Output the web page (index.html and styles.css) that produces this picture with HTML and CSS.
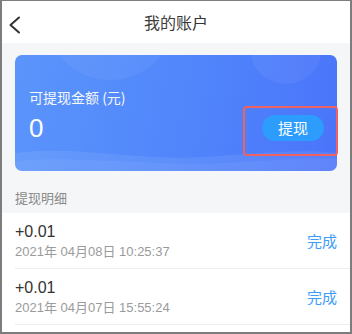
FILE: index.html
```html
<!DOCTYPE html>
<html lang="zh-CN">
<head>
<meta charset="utf-8">
<title>我的账户</title>
<link rel="stylesheet" href="styles.css">
</head>
<body>
<div class="frame">
  <header class="topbar">
    <svg class="back" width="14" height="18" viewBox="0 0 14 18"><path d="M12 1.5 L3.5 9 L12 16.5" fill="none" stroke="#333" stroke-width="2" stroke-linecap="round" stroke-linejoin="round"/></svg>
    <h1 class="title">我的账户</h1>
  </header>
  <main class="content">
    <section class="card">
      <div class="deco deco-a"></div>
      <div class="deco deco-b"></div>
      <svg class="wave" viewBox="0 0 322 24" preserveAspectRatio="none"><path d="M0 6 C60 -2 120 14 190 10 C250 6 290 2 322 6 L322 24 L0 24 Z" fill="rgba(255,255,255,0.08)"/><path d="M0 14 C70 8 140 20 210 16 C260 13 300 10 322 12 L322 24 L0 24 Z" fill="rgba(255,255,255,0.05)"/></svg>
      <div class="card-body">
        <div class="label">可提现金额 (元)</div>
        <div class="amount-row">
          <span class="amount">0</span>
          <button class="withdraw">提现</button>
        </div>
      </div>
      <div class="highlight"></div>
    </section>
    <div class="section-title">提现明细</div>
    <ul class="list">
      <li class="item">
        <div class="info">
          <div class="value">+0.01</div>
          <div class="date">2021年 04月08日 10:25:37</div>
        </div>
        <span class="status">完成</span>
      </li>
      <li class="item">
        <div class="info">
          <div class="value">+0.01</div>
          <div class="date">2021年 04月07日 15:55:24</div>
        </div>
        <span class="status">完成</span>
      </li>
    </ul>
  </main>
</div>
</body>
</html>
```
FILE: styles.css
```css
* { box-sizing: border-box; }
html, body { margin: 0; padding: 0; }
body {
  width: 352px;
  height: 334px;
  overflow: hidden;
  font-family: "Liberation Sans", "Noto Sans CJK SC", sans-serif;
  background: #fff;
}
.frame {
  width: 352px;
  height: 334px;
  border-style: solid;
  border-color: #7d7d7d;
  border-width: 1px 2px 2px 2px;
  display: flex;
  flex-direction: column;
  overflow: hidden;
  position: relative;
}
.topbar {
  height: 42px;
  flex: none;
  background: #fff;
  display: flex;
  align-items: center;
  justify-content: center;
  position: relative;
}
.back {
  position: absolute;
  left: 5px;
  top: 15px;
}
.title {
  margin: 0;
  font-size: 16px;
  font-weight: normal;
  color: #333;
  font-family: "Noto Sans CJK SC", sans-serif;
  line-height: 22px;
}
.content {
  flex: 1;
  background: #f5f6f7;
  padding-top: 12px;
  display: flex;
  flex-direction: column;
}
.card {
  margin: 0 13px;
  height: 116px;
  border-radius: 7px;
  background: linear-gradient(100deg, #5b95fb 0%, #5085fb 55%, #4a74fa 100%);
  position: relative;
  flex: none;
}
.deco {
  position: absolute;
  border-radius: 50%;
  background: rgba(255,255,255,0.05);
}
.deco-a {
  width: 72px; height: 72px;
  left: 235px; top: -43px;
}
.deco-b {
  width: 130px; height: 130px;
  left: 30px; top: -105px;
}
.wave {
  position: absolute;
  left: 0; bottom: 0;
  width: 100%;
  height: 24px;
  border-radius: 0 0 7px 7px;
}
.card-body {
  position: relative;
  padding: 32px 13px 0 14px;
  color: #fff;
}
.label {
  font-size: 14px;
  line-height: 20px;
  font-family: "Noto Sans CJK SC", sans-serif;
  opacity: 0.95;
}
.amount-row {
  margin-top: 4px;
  display: flex;
  align-items: center;
  justify-content: space-between;
  height: 34px;
}
.amount {
  font-size: 26px;
  line-height: 34px;
  font-family: "Liberation Sans", sans-serif;
  font-weight: normal;
}
.withdraw {
  width: 62px;
  height: 26px;
  border: none;
  border-radius: 13px;
  background: #2c9cfd;
  color: #fff;
  font-size: 15px;
  font-family: "Noto Sans CJK SC", sans-serif;
  padding: 0;
  line-height: 26px;
}
.highlight {
  position: absolute;
  left: 228px;
  top: 51px;
  width: 95px;
  height: 50px;
  border: 2px solid #f06262;
  border-radius: 4px;
}
.section-title {
  height: 42px;
  padding-left: 13px;
  padding-top: 18px;
  font-size: 13px;
  line-height: 18px;
  color: #8a8a8a;
  font-family: "Noto Sans CJK SC", sans-serif;
}
.list {
  list-style: none;
  margin: 0;
  padding: 0 0 0 13px;
  background: #fff;
  flex: 1;
}
.item {
  height: 56px;
  border-bottom: 1px solid #eeeeee;
  display: flex;
  align-items: center;
  justify-content: space-between;
  padding-right: 13px;
}
.info {
  display: flex;
  flex-direction: column;
  padding-top: 1px;
}
.value {
  font-size: 16px;
  line-height: 20px;
  color: #333;
}
.date {
  font-size: 13px;
  line-height: 18px;
  color: #9a9a9a;
  margin-top: 1px;
}
.status {
  font-size: 15px;
  color: #3d9df7;
  font-family: "Noto Sans CJK SC", sans-serif;
  line-height: 20px;
}
```
